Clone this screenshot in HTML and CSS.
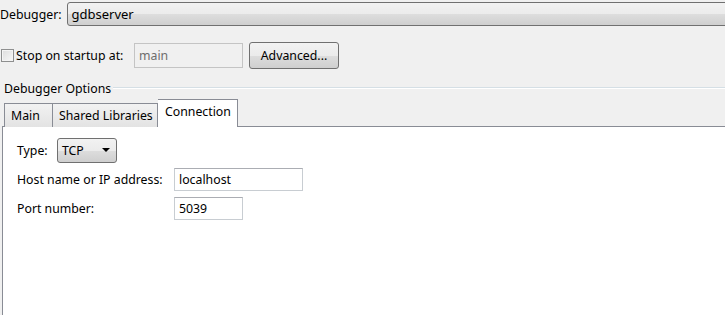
FILE: index.html
```html
<!DOCTYPE html>
<html>

<head>
    <title>Debugger</title>
    <link rel="stylesheet" href="styles.css">
</head>

<body>

    <div class="row debugger-row">
        <span class="label">Debugger:</span>
        <div class="combo wide">gdbserver</div>
    </div>

    <div class="row startup-row">
        <span class="checkbox"></span>
        <span class="label startup-label">Stop on startup at:</span>
        <div class="text-field disabled startup-field">main</div>
        <button type="button" class="button">Advanced...</button>
    </div>

    <div class="group-title">
        <span>Debugger Options</span>
        <div class="group-line"></div>
    </div>

    <div class="tabs">
        <div class="tab tab-main">Main</div>
        <div class="tab tab-libs">Shared Libraries</div>
        <div class="tab tab-conn active">Connection</div>
    </div>

    <div class="panel">
        <div class="row type-row">
            <span class="label type-label">Type:</span>
            <div class="combo small">
                <span>TCP</span>
                <span class="arrow"></span>
            </div>
        </div>
        <div class="row field-row">
            <span class="label field-label">Host name or IP address:</span>
            <div class="text-field host-field">localhost</div>
        </div>
        <div class="row field-row">
            <span class="label field-label">Port number:</span>
            <div class="text-field port-field">5039</div>
        </div>
    </div>

</body>

</html>
```

FILE: styles.css
```css
body {
    font-family: "Noto Sans", Arial, sans-serif;
    font-size: 12.3px;
    color: #000;
    background: #f0f0f0;
    margin: 0;
    padding: 0;
    height: 315px;
    overflow: hidden;
    display: flex;
    flex-direction: column;
}

.row {
    display: flex;
    align-items: center;
}

.label {
    white-space: nowrap;
}

.debugger-row {
    padding-top: 2px;
    height: 24px;
}

.combo {
    box-sizing: border-box;
    border: 1px solid #707070;
    border-radius: 3px;
    background: linear-gradient(#f2f2f2 0%, #ebebeb 50%, #dddddd 51%, #cfcfcf 100%);
    display: flex;
    align-items: center;
}

.combo.wide {
    height: 24px;
    margin-left: 5px;
    margin-right: -10px;
    flex: 1;
    padding-left: 4px;
    font-size: 13px;
}

.startup-row {
    margin-top: 16px;
    height: 26px;
}

.checkbox {
    box-sizing: border-box;
    width: 13px;
    height: 13px;
    margin-left: 1px;
    margin-right: 2px;
    border: 1px solid #8e8f8f;
    background: linear-gradient(135deg, #dcdcdc, #f8f8f8);
    box-shadow: inset 0 0 0 1px #f4f4f4;
}

.startup-label {
    width: 118px;
}

.text-field {
    box-sizing: border-box;
    border: 1px solid #c8cdd2;
    border-top-color: #abadb3;
    background: #fff;
    height: 23px;
    padding-left: 4px;
    display: flex;
    align-items: center;
}

.text-field.disabled {
    background: #f0f0f0;
    color: #6d6d6d;
    border-color: #c4c4c4;
}

.startup-field {
    width: 109px;
    height: 25px;
}

.button {
    box-sizing: border-box;
    font: inherit;
    height: 27px;
    width: 90px;
    margin-left: 6px;
    border: 1px solid #707070;
    border-radius: 3px;
    background: linear-gradient(#f2f2f2 0%, #ebebeb 50%, #dddddd 51%, #cfcfcf 100%);
    padding: 0;
}

.group-title {
    display: flex;
    align-items: center;
    margin-top: 12px;
    padding-left: 4px;
    height: 16px;
}

.group-line {
    flex: 1;
    margin-left: 2px;
    border-top: 1px solid #d5dfe5;
    border-bottom: 1px solid #fff;
}

.tabs {
    display: flex;
    align-items: flex-end;
    margin-top: 3px;
    padding-left: 4px;
    height: 28px;
    position: relative;
    z-index: 1;
    margin-bottom: -1px;
}

.tab {
    box-sizing: border-box;
    height: 24px;
    padding: 0 6px;
    border: 1px solid #898c95;
    border-left: none;
    border-bottom: none;
    background: linear-gradient(#f2f2f2, #e3e3e3);
    display: flex;
    align-items: center;
    white-space: nowrap;
    flex-shrink: 0;
}

.tab:first-child {
    border-left: 1px solid #898c95;
}

.tab-main {
    width: 49px;
    padding-left: 6px;
}

.tab-libs {
    width: 105px;
}

.tab.active {
    width: 80px;
    height: 28px;
    padding: 0 7px 4px;
    background: #fff;
    border-left: none;
}

.panel {
    flex: 1;
    margin-left: 2px;
    background: #fff;
    border-top: 1px solid #898c95;
    border-left: 1px solid #898c95;
    padding: 11px 0 0 14px;
}

.type-row {
    height: 24px;
}

.type-label {
    width: 40px;
}

.combo.small {
    width: 60px;
    height: 25px;
    padding: 0 6px 0 4px;
    justify-content: space-between;
    border-color: #707070;
}

.arrow {
    width: 0;
    height: 0;
    border-left: 4px solid transparent;
    border-right: 4px solid transparent;
    border-top: 4px solid #000;
}

.field-row {
    margin-top: 6px;
}

.field-label {
    width: 157px;
}

.host-field {
    width: 129px;
}

.port-field {
    width: 69px;
}
```
